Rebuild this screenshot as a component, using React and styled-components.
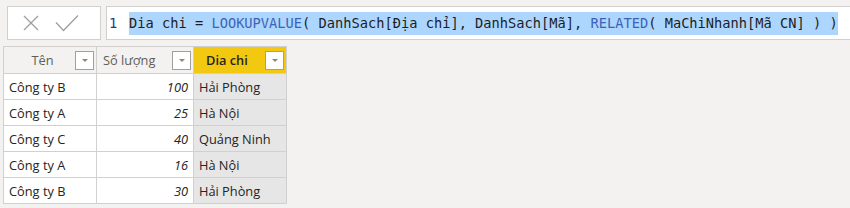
import React from "react";
import styled, { createGlobalStyle } from "styled-components";

const GlobalStyle = createGlobalStyle`
  html, body { margin: 0; padding: 0; background: #f3f2f1; }
  body { font-family: "Open Sans", "Noto Sans", sans-serif; }
`;

const Page = styled.div`
  width: 850px;
  height: 208px;
  overflow: hidden;
  padding-top: 6px;
  box-sizing: border-box;
`;

const FormulaBar = styled.div`
  display: flex;
  gap: 5px;
  height: 34px;
  margin-left: 7px;
  margin-right: -4px;
`;

const ActionBox = styled.div`
  width: 94px;
  box-sizing: border-box;
  background: #fff;
  border: 1px solid #d2d0ce;
  display: flex;
  align-items: center;
  justify-content: center;
  gap: 16px;
  padding-right: 6px;
`;

const FormulaBox = styled.div`
  flex: 1;
  background: #fff;
  border: 1px solid #d2d0ce;
  display: flex;
  align-items: center;
  font-family: "DejaVu Sans Mono", "Liberation Mono", monospace;
  font-size: 13.7px;
  color: #1e1e1e;
  white-space: pre;
`;

const LineNo = styled.span`
  color: #1a3a8f;
  width: 22px;
  padding-left: 2px;
  box-sizing: border-box;
`;

const Selection = styled.span`
  background: #add6ff;
  line-height: 23px;
  display: inline-block;
`;

const Fn = styled.span`
  color: #3c63b6;
`;

const Table = styled.table`
  margin: 6px 0 0 3px;
  border-collapse: collapse;
  font-size: 12.8px;
  color: #252423;
`;

const HeadCell = styled.th`
  height: 27px;
  padding: 0 2px 0 6px;
  box-sizing: border-box;
  border: 1px solid #d2d0ce;
  background: ${(p) => (p.$active ? "#f2c811" : "#f3f2f1")};
  font-weight: ${(p) => (p.$active ? 600 : 400)};
  color: ${(p) => (p.$active ? "#252423" : "#605e5c")};
  text-align: left;
`;

const HeadInner = styled.div`
  display: flex;
  align-items: center;
  justify-content: space-between;
`;

const HeadLabel = styled.span`
  flex: 1;
  text-align: ${(p) => (p.$center ? "center" : "left")};
  padding-left: ${(p) => (p.$pad || 0)}px;
`;

const FilterBtn = styled.span`
  width: 19px;
  height: 19px;
  box-sizing: border-box;
  border: 1px solid #a19f9d;
  background: #fff;
  display: flex;
  align-items: center;
  justify-content: center;
  &::after {
    content: "";
    border-left: 3.5px solid transparent;
    border-right: 3.5px solid transparent;
    border-top: 3.5px solid #8a8886;
  }
`;

const Cell = styled.td`
  height: 26px;
  padding: 0 5px;
  box-sizing: border-box;
  border: 1px solid #d2d0ce;
  background: ${(p) => (p.$calc ? "#e6e6e6" : "#fff")};
  text-align: ${(p) => (p.$num ? "right" : "left")};
  font-style: ${(p) => (p.$num ? "italic" : "normal")};
  white-space: nowrap;
`;

const Col = styled.col`
  width: ${(p) => p.$w}px;
`;

const rows = [
  ["Công ty B", 100, "Hải Phòng"],
  ["Công ty A", 25, "Hà Nội"],
  ["Công ty C", 40, "Quảng Ninh"],
  ["Công ty A", 16, "Hà Nội"],
  ["Công ty B", 30, "Hải Phòng"],
];

const CrossIcon = () => (
  <svg width="16" height="16" viewBox="0 0 16 16">
    <path d="M1 1 L15 15 M15 1 L1 15" stroke="#a19f9d" strokeWidth="1.3" fill="none" />
  </svg>
);

const CheckIcon = () => (
  <svg width="24" height="18" viewBox="0 0 24 18">
    <path d="M1 8.5 L8.5 16.5 L23 1.5" stroke="#a19f9d" strokeWidth="1.3" fill="none" />
  </svg>
);

export default function App() {
  return (
    <Page>
      <GlobalStyle />
      <FormulaBar>
        <ActionBox>
          <CrossIcon />
          <CheckIcon />
        </ActionBox>
        <FormulaBox>
          <LineNo>1</LineNo>
          <Selection>
            {"Dia chi = "}
            <Fn>LOOKUPVALUE</Fn>
            {"( DanhSach[Địa chỉ], DanhSach[Mã], "}
            <Fn>RELATED</Fn>
            {"( MaChiNhanh[Mã CN] ) )"}
          </Selection>
        </FormulaBox>
      </FormulaBar>
      <Table>
        <colgroup>
          <Col $w={93} />
          <Col $w={97} />
          <Col $w={93} />
        </colgroup>
        <thead>
          <tr>
            <HeadCell>
              <HeadInner>
                <HeadLabel $center>Tên</HeadLabel>
                <FilterBtn />
              </HeadInner>
            </HeadCell>
            <HeadCell>
              <HeadInner>
                <HeadLabel>Số lượng</HeadLabel>
                <FilterBtn />
              </HeadInner>
            </HeadCell>
            <HeadCell $active>
              <HeadInner>
                <HeadLabel $pad={6}>Dia chi</HeadLabel>
                <FilterBtn />
              </HeadInner>
            </HeadCell>
          </tr>
        </thead>
        <tbody>
          {rows.map((r, i) => (
            <tr key={i}>
              <Cell>{r[0]}</Cell>
              <Cell $num>{r[1]}</Cell>
              <Cell $calc>{r[2]}</Cell>
            </tr>
          ))}
        </tbody>
      </Table>
    </Page>
  );
}
